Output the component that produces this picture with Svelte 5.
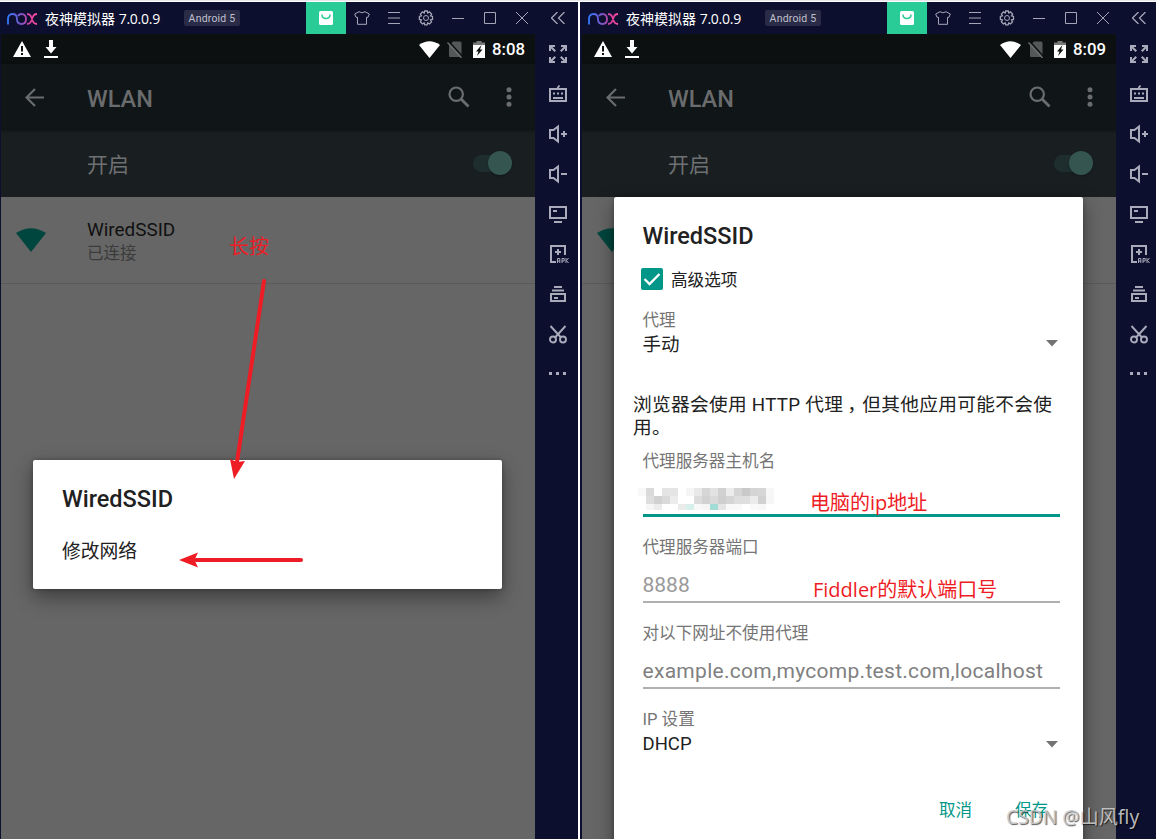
<script lang="ts">
  interface Screen {
    id: string;
    time: string;
    dialog: 'menu' | 'proxy';
  }

  const screens: Screen[] = [
    { id: 'left', time: '8:08', dialog: 'menu' },
    { id: 'right', time: '8:09', dialog: 'proxy' },
  ];

  const tools = ['fullscreen', 'keyboard', 'vol-up', 'vol-down', 'screen', 'apk', 'files', 'cut', 'more'];

  // grey level of each 8px block that hides the host name
  const mosaic = [
    [248, 218, 255, 228, 229, 255, 245, 232, 214, 226, 209, 236, 213, 201, 212, 214, 247],
    [255, 222, 209, 218, 236, 255, 255, 220, 210, 218, 207, 213, 222, 222, 235, 209, 246],
    [255, 246, 236, 255, 255, 235, 216, 248, 245, 165, 228, 249, 249, 255, 249, 247, 255],
  ];

  function blockColor(value: number): string {
    if (value === 165) return '#a3dcd4';
    if (value === 216) return '#d8f0ec';
    return `rgb(${value}, ${value}, ${value})`;
  }
</script>

{#snippet toolIcon(name: string)}
  <svg class="tool-icon" width="20" height="20" viewBox="0 0 20 20" fill="none" stroke="#a9abbb" stroke-width="2">
    {#if name === 'fullscreen'}
      <path d="M1 1h6v2H4.500l3.500 3.500L6.500 8 3 4.500V7H1zM19 1v6h-2V4.500L13.500 8 12 6.500 15.500 3H13V1zM1 19v-6h2v2.500L6.500 12 8 13.500 4.500 17H7v2zM19 19h-6v-2h2.500L12 13.500 13.500 12l3.500 3.500V13h2z" fill="#a9abbb" stroke="none" />
    {:else if name === 'keyboard'}
      <path d="M2 5h16v12H2zM9.500 4l2-2.500M5 14h10" />
      <path d="M5 9.500h2M9 9.500h2M13 9.500h2" />
    {:else if name === 'vol-up'}
      <path d="M2 6h3.500L10 2.500v15L5.500 14H2zM13 10h6M16 7v6" />
    {:else if name === 'vol-down'}
      <path d="M2 6h3.500L10 2.500v15L5.500 14H2zM13 10h6" />
    {:else if name === 'screen'}
      <path d="M2 3h16v11H2zM5 7h4M6 18h8" />
    {:else if name === 'apk'}
      <path d="M17 11V2H3v16h5M10 5v6M7 8h6" />
      <path d="M9.500 19v-4.500h2.300V19M9.500 17h2.300M14 19v-4.500h2.200V17H14M18 14v5M20.500 14l-2 2.500 2 2.500" stroke-width="1" />
    {:else if name === 'files'}
      <path d="M6 3h8M4 6.500h12M3 10h14v7H3zM6 14h4" />
    {:else if name === 'cut'}
      <path d="M2.500 2L13 13.500M17.500 2L7 13.500" stroke-width="1.900" />
      <circle cx="5" cy="15.500" r="3" stroke-width="1.900" />
      <circle cx="15" cy="15.500" r="3" stroke-width="1.900" />
    {:else}
      <path d="M1 9.500h3M8 9.500h3M15 9.500h3" stroke-width="3" />
    {/if}
  </svg>
{/snippet}

{#snippet arrow()}
  <svg class="caret" width="12" height="7" viewBox="0 0 12 7"><path d="M0 0h12L6 6.500z" fill="#737373" /></svg>
{/snippet}

<div class="desktop">
  {#each screens as screen (screen.id)}
    <section class="emulator {screen.id}">
      <header class="titlebar">
        <svg class="logo" width="31" height="12" viewBox="0 0 31 12" fill="none" stroke-width="1.800">
          <defs>
            <linearGradient id="nox-{screen.id}" gradientUnits="userSpaceOnUse" x1="0" y1="0" x2="31" y2="0">
              <stop offset="0" stop-color="#2f7bff" />
              <stop offset=".45" stop-color="#7b55c8" />
              <stop offset=".75" stop-color="#dd3f9c" />
              <stop offset="1" stop-color="#ff4fa0" />
            </linearGradient>
          </defs>
          <path
            stroke="url(#nox-{screen.id})"
            d="M1 11.500V6Q1 1 5.500 1T10 6Q10 11 14.500 11T19 6Q19 1 14.500 1Q12 1 11 3M20 1Q23 1 24 3.500L26 8.500Q27 11 30 11M30 1Q27 1 26 3.500L24 8.500Q23 11 20 11"
          />
        </svg>
        <span class="app-name">夜神模拟器 <i>7.0.0.9</i></span>
        <span class="version">Android 5</span>
        <div class="actions">
          <span class="action store">
            <svg width="14" height="14" viewBox="0 0 14 14"><rect width="14" height="14" rx="1.500" fill="#fff" /><path d="M3 3.500Q3 7.500 7 7.500T11 3.500" fill="none" stroke="#29cc96" stroke-width="1.500" /></svg>
          </span>
          <span class="action">
            <svg width="16" height="14" viewBox="0 0 16 14"><path d="M5 .7Q8 3 11 .7L15.300 3 14 6.300H12.500V13.300H3.500V6.300H2L.7 3z" /></svg>
          </span>
          <span class="action">
            <svg width="12" height="12" viewBox="0 0 12 12"><path d="M0 .5h12M0 6h12M0 11.500h12" /></svg>
          </span>
          <span class="action">
            <svg width="16" height="16" viewBox="0 0 16 16">
              <path d="M6.700 1h2.600l.5 2 1.700-1.100 2.100 2.100L12.500 5.800l2 .6v3l-2 .6 1 1.900-2 2-1.800-1-.6 2H6.800l-.6-2-1.800 1-2-2 1-1.900-2-.6v-3l2-.6-1-1.800 2.100-2.100L6.200 3z" stroke-width="1.300" />
              <circle cx="8" cy="8" r="2.500" />
            </svg>
          </span>
          <span class="action">
            <svg width="12" height="12" viewBox="0 0 12 12"><path d="M0 6.500h12" /></svg>
          </span>
          <span class="action">
            <svg width="12" height="12" viewBox="0 0 12 12"><path d="M.5.5h11v11H.5z" /></svg>
          </span>
          <span class="action">
            <svg width="12" height="12" viewBox="0 0 12 12"><path d="M0 0l12 12M12 0L0 12" /></svg>
          </span>
          <span class="action collapse">
            <svg width="14" height="12" viewBox="0 0 14 12"><path d="M6.500 0l-6 6 6 6M13.500 0l-6 6 6 6" stroke-width="1.300" /></svg>
          </span>
        </div>
      </header>

      <div class="body">
        <main class="phone">
          <div class="statusbar">
            <svg width="18" height="16" viewBox="0 0 18 16"><path d="M9 0l9 16H0z" fill="#fff" /><path d="M9 5v5.500M9 12v2" stroke="#0c1010" stroke-width="2" /></svg>
            <svg class="download" width="14" height="18" viewBox="0 0 14 18"><path d="M5 0h4v7h3.500L7 13.500 1.500 7H5zM0 16h14v2H0z" fill="#fff" /></svg>
            <svg class="wifi" width="21" height="17" viewBox="0 0 21 17"><path d="M0 4Q10.500-3.500 21 4L10.500 17z" fill="#fff" /></svg>
            <svg class="sim" width="16" height="17" viewBox="0 0 16 17"><path d="M6 .5h7q1.500 0 1.500 1.500v14H3q-1 0-1-1V4.500z" fill="#555858" /><path d="M1.500 0l14 15.500" stroke="#0c1010" stroke-width="1.500" /><path d="M.5 1.500L14.500 17" stroke="#6e7070" stroke-width="1.300" /></svg>
            <svg class="battery" width="12" height="17" viewBox="0 0 12 17"><path d="M0 1.500h3.500V0h5v1.500H12V5H0z" fill="#777" /><path d="M0 4h12v13H0z" fill="#fff" /><path d="M8.500 4L3 10.500h2.500L4 15l5.500-6.500H7z" fill="#0c1010" /></svg>
            <span class="clock">{screen.time}</span>
          </div>

          <div class="appbar">
            <svg class="back" width="20" height="19" viewBox="0 0 20 19"><path d="M10 1L1.500 9.500 10 18M1.500 9.500H19" /></svg>
            <h1>WLAN</h1>
            <svg class="search" width="22" height="22" viewBox="0 0 22 22"><circle cx="8.200" cy="8.200" r="6.700" /><path d="M13 13l7.500 7.500" stroke-width="2.800" /></svg>
            <svg class="overflow" width="6" height="20" viewBox="0 0 6 20"><circle cx="3" cy="2.700" r="2.500" /><circle cx="3" cy="10" r="2.500" /><circle cx="3" cy="17.200" r="2.500" /></svg>
          </div>

          <div class="switchbar">
            <span>开启</span>
            <span class="switch"></span>
          </div>

          <div class="network">
            <svg width="30" height="24" viewBox="0 0 30 24"><path d="M0 5Q15-4.500 30 5L15 24z" fill="#00463e" /></svg>
            {#if screen.dialog === 'menu'}
              <div>
                <div class="ssid">WiredSSID</div>
                <div class="state">已连接</div>
              </div>
            {/if}
          </div>

          {#if screen.dialog === 'menu'}
            <div class="dialog menu">
              <h2>WiredSSID</h2>
              <div class="menu-item">修改网络</div>
            </div>
            <span class="note press">长按</span>
            <svg class="pointers" width="310" height="340" viewBox="0 0 310 340">
              <path d="M263 47L236 228M300 326H195" stroke="#ee1c25" stroke-width="4" stroke-linecap="round" fill="none" />
              <path d="M233 245l-4-20 7 3 8-1zM178 326l19-7.500-3.500 7.500 3.500 7.500z" fill="#ee1c25" />
            </svg>
          {:else}
            <div class="dialog proxy">
              <h2>WiredSSID</h2>
              <div class="advanced">
                <span class="checkbox">
                  <svg width="22" height="22" viewBox="0 0 22 22"><path d="M3.500 11l5 5L18.500 6" fill="none" stroke="#fff" stroke-width="2.300" /></svg>
                </span>
                高级选项
              </div>
              <div class="field select mode">
                <label for="proxy">代理</label>
                <div class="value" id="proxy">手动{@render arrow()}</div>
              </div>
              <p class="message">浏览器会使用 HTTP 代理<span class="comma">，</span>但其他应用可能不会使用。</p>
              <div class="field">
                <label for="host">代理服务器主机名</label>
                <div class="input focused" id="host">
                  <svg class="mosaic" width="136" height="22" viewBox="0 0 136 22">
                    {#each mosaic as row, y}
                      {#each row as value, x}
                        <rect x={x * 8} y={y * 8} width="8" height="8" fill={blockColor(value)} />
                      {/each}
                    {/each}
                  </svg>
                  <span class="note host-note">电脑的ip地址</span>
                </div>
              </div>
              <div class="field">
                <label for="port">代理服务器端口</label>
                <div class="input" id="port">
                  <span class="port">8888</span>
                  <span class="note port-note">Fiddler的默认端口号</span>
                </div>
              </div>
              <div class="field">
                <label for="bypass">对以下网址不使用代理</label>
                <div class="input" id="bypass"><span class="hint">example.com,mycomp.test.com,localhost</span></div>
              </div>
              <div class="field select">
                <label for="ip">IP 设置</label>
                <div class="value" id="ip">DHCP{@render arrow()}</div>
              </div>
              <div class="buttons">
                <span>取消</span>
                <span>保存</span>
              </div>
            </div>
          {/if}
        </main>

        <aside class="tools">
          {#each tools as name}
            <span class="tool">{@render toolIcon(name)}</span>
          {/each}
        </aside>
      </div>
    </section>
  {/each}
  <span class="watermark">CSDN @山风fly</span>
</div>

<style>
  :global(body) {
    margin: 0;
    overflow: hidden;
  }

  .desktop {
    position: relative;
    display: flex;
    gap: 2px;
    box-sizing: border-box;
    width: 1156px;
    height: 839px;
    padding-top: 2px;
    overflow: hidden;
    background: linear-gradient(#e6e6ec 1px, #fff 1px);
    font-family: Roboto, 'Noto Sans CJK SC', sans-serif;
    color: #212121;
  }

  .emulator {
    box-sizing: border-box;
    flex: none;
    width: 578px;
    height: 837px;
    padding-left: 1px;
    background: #0c0f2e;
  }

  .emulator.right {
    width: 579px;
    padding-left: 2px;
  }

  .titlebar {
    display: flex;
    align-items: center;
    height: 32px;
  }

  .logo {
    margin: 1px 0 0 6px;
  }

  .app-name {
    width: 130px;
    margin: 1px 0 0 7px;
    color: #fff;
    font: 14px/20px 'Open Sans', 'Noto Sans CJK SC', sans-serif;
    white-space: nowrap;
  }

  .app-name i {
    font-style: normal;
    letter-spacing: -0.25px;
  }

  .version {
    box-sizing: border-box;
    width: 56px;
    height: 16px;
    margin-left: 9px;
    border-radius: 2px;
    background: #292b47;
    color: #c0c1cd;
    font: 10.5px/17px Roboto, sans-serif;
    letter-spacing: 0.2px;
    text-align: center;
  }

  .actions {
    display: flex;
    height: 100%;
    margin-left: 66px;
  }

  .action {
    display: flex;
    align-items: center;
    justify-content: center;
    width: 32px;
  }

  .action svg {
    fill: none;
    stroke: #a4a6b7;
  }

  .action.store {
    width: 40px;
    background: #29cc96;
  }

  .action.store svg {
    stroke: none;
  }

  .action.collapse {
    width: 40px;
  }

  .body {
    display: flex;
    height: 805px;
  }

  .phone {
    position: relative;
    width: 534px;
    overflow: hidden;
    background: #666;
  }

  .tools {
    width: 43px;
  }

  .tool {
    display: flex;
    align-items: center;
    height: 40px;
    padding-left: 13px;
  }

  .tool-icon {
    overflow: visible;
  }

  .statusbar {
    display: flex;
    align-items: center;
    box-sizing: border-box;
    height: 30px;
    padding: 0 9px 0 12px;
    background: #0c1010;
  }

  .download {
    margin-left: 13px;
  }

  .wifi {
    margin-left: auto;
  }

  .sim {
    margin-left: 7px;
  }

  .battery {
    margin-left: 10px;
  }

  .clock {
    width: 34px;
    margin-left: 7px;
    color: #fff;
    font-size: 16.8px;
    font-weight: 500;
    white-space: nowrap;
  }

  .appbar {
    display: flex;
    align-items: center;
    height: 66px;
    background: #101517;
    box-shadow: 0 1px 3px rgba(0, 0, 0, 0.4);
    position: relative;
  }

  .appbar svg {
    fill: none;
    stroke: #6a6c6d;
    stroke-width: 2.2;
  }

  .back {
    margin-left: 24px;
  }

  h1 {
    width: 361px;
    margin: 3px 0 0 42px;
    color: #6a6c6d;
    font-size: 23.5px;
    font-weight: 500;
  }

  .appbar .overflow {
    margin-left: 36px;
    fill: #6a6c6d;
    stroke: none;
  }

  .switchbar {
    display: flex;
    align-items: center;
    justify-content: space-between;
    box-sizing: border-box;
    height: 67px;
    padding: 0 23px 1px 86px;
    background: #191e21;
    color: #6e7072;
    font-size: 21px;
  }

  .switch {
    display: flex;
    justify-content: flex-end;
    align-items: center;
    width: 39px;
    height: 17px;
    border-radius: 9px;
    background: #1e2e2e;
  }

  .switch::after {
    content: '';
    width: 24px;
    height: 24px;
    border-radius: 50%;
    background: #345550;
    box-shadow: 0 1px 2px rgba(0, 0, 0, 0.3);
  }

  .network {
    display: flex;
    align-items: center;
    box-sizing: border-box;
    height: 87px;
    padding: 2px 0 0 15px;
    border-bottom: 1px solid #5a5a5a;
  }

  .network svg {
    margin: -3px 41px 0 0;
  }

  .ssid {
    padding-top: 2px;
    color: #111;
    font-size: 18.9px;
    line-height: 24px;
  }

  .state {
    color: #3b3b3b;
    font-size: 16.5px;
    line-height: 24px;
  }

  .dialog {
    position: absolute;
    box-sizing: border-box;
    left: 32px;
    width: 469px;
    border-radius: 2px;
    background: #fff;
    box-shadow: 0 8px 20px rgba(0, 0, 0, 0.4), 0 0 5px rgba(0, 0, 0, 0.25);
  }

  h2 {
    margin: 0;
    font-size: 23.5px;
    font-weight: 500;
    line-height: 50px;
  }

  .menu {
    top: 426px;
    height: 129px;
    padding: 14px 29px;
  }

  .menu-item {
    font-size: 18.8px;
    line-height: 56px;
  }

  .note {
    position: absolute;
    color: #ee1c25;
    font: 20px/24px 'Open Sans', 'Noto Sans CJK SC', sans-serif;
    white-space: nowrap;
  }

  .press {
    left: 228px;
    top: 201px;
  }

  .pointers {
    position: absolute;
    left: 0;
    top: 200px;
  }

  .proxy {
    top: 163px;
    height: 660px;
    padding: 14px 23px 0 28.5px;
  }

  .advanced {
    display: flex;
    align-items: center;
    height: 36px;
    margin-bottom: 10px;
    font-size: 16.6px;
  }

  .checkbox {
    width: 22px;
    height: 22px;
    margin: 0 8px 0 -1.5px;
    border-radius: 2px;
    background: #009688;
  }

  .field {
    height: 86px;
  }

  label {
    display: block;
    box-sizing: border-box;
    height: 24px;
    padding-top: 1px;
    color: #757575;
    font-size: 16.6px;
    line-height: 24px;
  }

  .value {
    display: flex;
    align-items: center;
    justify-content: space-between;
    height: 26px;
    padding-right: 2px;
    font-size: 18.5px;
  }

  .mode label {
    padding-top: 2px;
  }

  .mode .value {
    height: 24px;
  }

  .message {
    height: 46px;
    margin: 1px 0 9px -9.5px;
    font-size: 18.7px;
    letter-spacing: 0.3px;
    line-height: 23px;
  }

  .comma {
    position: relative;
    left: 4px;
  }

  .input {
    position: relative;
    display: flex;
    align-items: center;
    box-sizing: border-box;
    width: 417px;
    height: 44px;
    padding-top: 9px;
    border-bottom: 2px solid #b0b0b0;
  }

  .input.focused {
    border-bottom: 3px solid #009688;
  }

  .mosaic {
    margin: 1px 0 0 -5px;
  }

  .port,
  .hint {
    color: #999;
    font-size: 21px;
  }

  .hint {
    color: #808080;
    letter-spacing: 0.29px;
  }

  .host-note {
    left: 167.5px;
    top: 18px;
  }

  .port-note {
    left: 170.5px;
    top: 19px;
  }

  .buttons {
    display: flex;
    gap: 43px;
    justify-content: flex-end;
    padding: 6px 12px 0 0;
    color: #009688;
    font-size: 16.5px;
    line-height: 24px;
  }

  .watermark {
    position: absolute;
    left: 1006px;
    top: 804px;
    color: rgba(205, 205, 205, 0.9);
    font: 19.2px/26px 'Noto Sans', 'Noto Sans CJK SC', sans-serif;
    text-shadow: 1px 1px 1px rgba(0, 0, 0, 0.65);
    white-space: nowrap;
  }
</style>
